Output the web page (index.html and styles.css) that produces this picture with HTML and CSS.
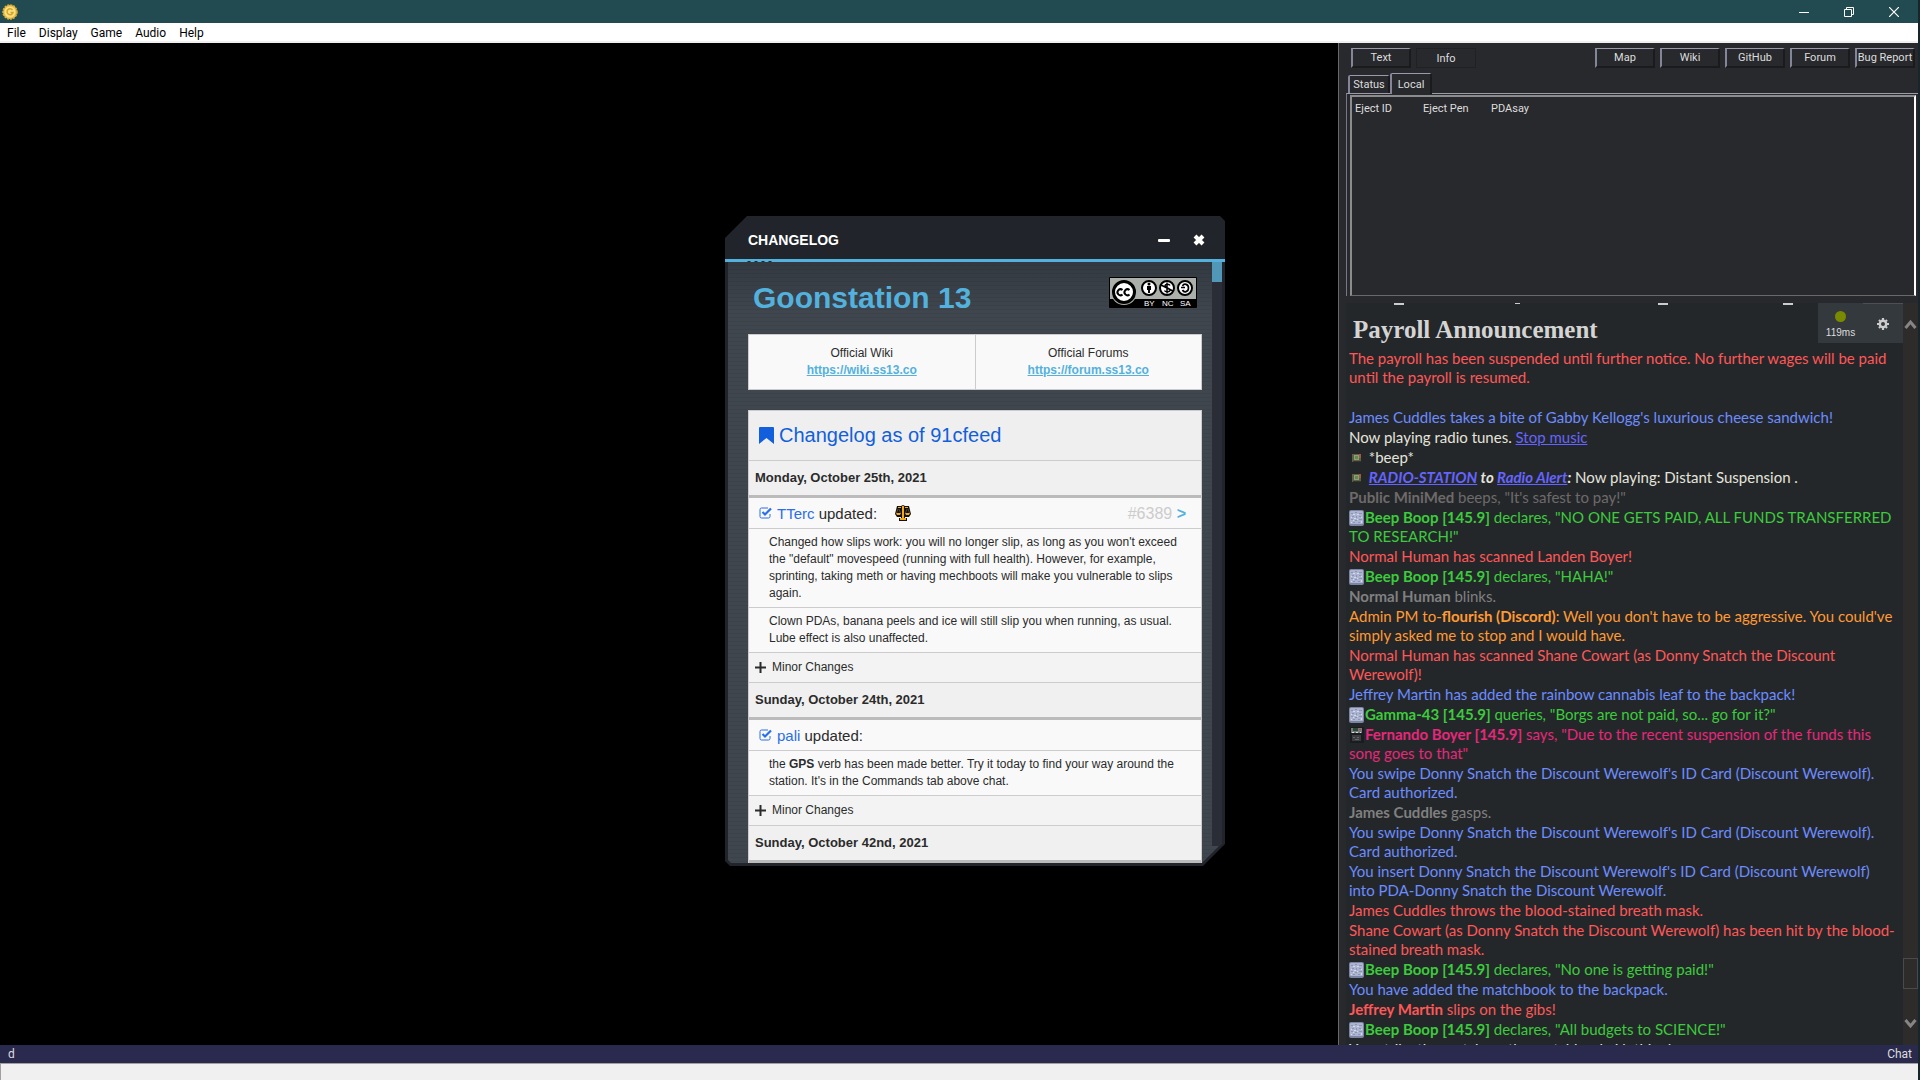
FILE: index.html
```html
<!DOCTYPE html>
<html lang="en">
<head>
    <meta charset="UTF-8">
    <meta name="viewport" content="width=device-width, initial-scale=1.0">
    <title>Goonstation 13</title>
    <link rel="stylesheet" href="styles.css">
</head>
<body>
    <!-- Shared icons -->
    <svg class="defs" width="0" height="0">
        <symbol id="icon-radio" viewBox="0 0 16 16">
            <path d="M3 4h9v8H3z" fill="#5d6046"/>
            <path d="M5 5h5v5H5z" fill="#8fa070"/>
            <path d="M6 6h3v3H6z" fill="#5f8a58"/>
            <path d="M10 4h2v4h-2z" fill="#a05a44"/>
            <path d="M4 11h8v1H4z" fill="#34362b"/>
        </symbol>
        <symbol id="icon-borg" viewBox="0 0 16 16">
            <rect x="0" y="0" width="15" height="16" rx="2" fill="#7c84a4"/>
            <rect x="1" y="1" width="13" height="13" rx="1" fill="#adb4cf"/>
            <path d="M2 3h2v1H2zM6 2h2v1H6zM10 3h3v1h-3zM3 6h2v1H3zM7 6h1v2H7zM10 6h2v1h-2zM2 9h2v1H2zM6 10h2v1H6zM10 9h3v1h-3zM4 12h2v1H4zM9 12h2v1H9z" fill="#8b93b8"/>
            <path d="M4 4h2v1H4zM8 4h2v1H8zM2 7h1v1H2zM5 8h2v1H5zM12 7h1v1h-1zM8 9h1v1H8zM4 10h1v1H4zM12 11h1v2h-1zM2 12h1v1H2z" fill="#d5daeb"/>
        </symbol>
        <symbol id="icon-passenger" viewBox="0 0 16 16">
            <rect x="1" y="0" width="14" height="16" fill="#1b1c1f"/>
            <path d="M2 1h11v5H2z" fill="#74797c"/>
            <path d="M4 1h5v3H4z" fill="#2c4a38"/>
            <path d="M10 2h2v1h-2z" fill="#c33"/>
            <path d="M3 5h2v1H3zM7 5h2v1H7zM11 5h1v1h-1z" fill="#d8dadd"/>
            <path d="M3 8h9v6H3z" fill="#3a3c3f"/>
            <path d="M4 10h2v1H4zM8 10h2v1H8zM6 12h4v1H6z" fill="#666"/>
        </symbol>
        <symbol id="icon-check" viewBox="0 0 14 12">
            <path d="M11 7v2.500a1.500 1.500 0 0 1-1.500 1.500h-7A1.500 1.500 0 0 1 1 9.500v-7A1.500 1.500 0 0 1 2.500 1H9" fill="none" stroke="#2a6fe8"/>
            <path d="M3.500 5L6 7.500 12 1.500" fill="none" stroke="#2a6fe8" stroke-width="2.200"/>
        </symbol>
        <symbol id="icon-plus" viewBox="0 0 11 11">
            <path d="M5.500 0v11M0 5.500h11" stroke="#2b2b2b" stroke-width="2"/>
        </symbol>
    </svg>

    <div class="app">
        <header class="titlebar">
            <svg class="app-icon" viewBox="0 0 16 16">
                <circle cx="8" cy="8" r="7" fill="#ecc040" stroke="#e0ad35" stroke-width="1.500" stroke-dasharray="2 1"/>
                <circle cx="8" cy="8" r="5.500" fill="#f7e08a"/>
                <path d="M10.500 6A3 3 0 1 0 11 8.500H8.500" fill="none" stroke="#d9a520" stroke-width="1.500"/>
            </svg>
            <div class="window-buttons">
                <button aria-label="Minimize"><svg width="10" height="10"><path d="M0 5.500h10" stroke="#fff"/></svg></button>
                <button aria-label="Restore"><svg width="10" height="10"><path d="M.5 2.500h7v7h-7zM2.500 2V.5h7v7H8" fill="none" stroke="#fff"/></svg></button>
                <button aria-label="Close"><svg width="10" height="10"><path d="M0 0l10 10M10 0L0 10" stroke="#fff" stroke-width="1.200"/></svg></button>
            </div>
        </header>

        <nav class="menubar">
            <a href="#">File</a>
            <a href="#">Display</a>
            <a href="#">Game</a>
            <a href="#">Audio</a>
            <a href="#">Help</a>
        </nav>

        <main class="main">
            <div class="map">
                <!-- Changelog popup -->
                <section class="popup">
                    <div class="popup-title">
                        <h2>CHANGELOG</h2>
                        <button aria-label="Minimize"><svg width="12" height="12"><rect x="0" y="5" width="12" height="3" rx="1" fill="#fff"/></svg></button>
                        <button aria-label="Close"><svg width="12" height="12"><path d="M2 2l8 8M10 2l-8 8" stroke="#fff" stroke-width="4"/></svg></button>
                    </div>
                    <div class="popup-line">
                        <svg width="30" height="3"><path d="M0 3L3 0h3L3 3zM7 3L10 0h3L10 3zM14 3L17 0h3L17 3zM21 3L24 0h3L24 3z" fill="#22272e"/></svg>
                    </div>
                    <div class="popup-body">
                        <div class="popup-content">
                            <div class="popup-head">
                                <h1>Goonstation 13</h1>
                                <svg class="cc-badge" width="88" height="31" viewBox="0 0 88 31">
                                    <rect width="88" height="31" rx="1" fill="#000"/>
                                    <path d="M1 1h86v21H1z" fill="#abb1aa"/>
                                    <circle cx="15" cy="15" r="13" fill="#abb1aa"/>
                                    <circle cx="15" cy="15" r="10.500" fill="#fff" stroke="#000" stroke-width="3"/>
                                    <path d="M13.500 13a3 3 0 1 0 0 4.500M20.500 13a3 3 0 1 0 0 4.500" fill="none" stroke="#000" stroke-width="2"/>
                                    <g fill="#fff" stroke="#000" stroke-width="2">
                                        <circle cx="40" cy="11" r="7"/>
                                        <circle cx="58" cy="11" r="7"/>
                                        <circle cx="76" cy="11" r="7"/>
                                    </g>
                                    <circle cx="40" cy="7" r="1.500"/>
                                    <path d="M38 9h4v4h-1v3h-2v-3h-1z"/>
                                    <path d="M61 8.500c-1-2-5-1.500-5 .5s5 2 5 4-4.500 2.500-5.500.5M58 5.500v11M52 8l12 6" fill="none" stroke="#000" stroke-width="1.500"/>
                                    <path d="M73.500 9c1.500-3 6-2 6 2s-4.500 5-6 2M72 10.500h4" fill="none" stroke="#000" stroke-width="1.700"/>
                                    <g class="cc-label">
                                        <text x="35" y="29">BY</text>
                                        <text x="53" y="29">NC</text>
                                        <text x="71" y="29">SA</text>
                                    </g>
                                </svg>
                            </div>

                            <div class="links">
                                <div>Official Wiki<br><a href="#">https://wiki.ss13.co</a></div>
                                <div>Official Forums<br><a href="#">https://forum.ss13.co</a></div>
                            </div>

                            <div class="log">
                                <h3>
                                    <svg width="15" height="17"><path d="M1 0h13a1 1 0 0 1 1 1v16l-7.500-6L0 17V1a1 1 0 0 1 1-1z" fill="#115fdc"/></svg>
                                    Changelog as of 91cfeed
                                </h3>

                                <h4>Monday, October 25th, 2021</h4>
                                <div class="author">
                                    <svg class="check" width="14" height="12"><use href="#icon-check"/></svg>
                                    <span><b>TTerc</b> updated:</span>
                                    <svg class="scales" width="16" height="16">
                                        <path d="M2 1h4l2-1 2 1h4l2 8-2 3h-4v1h2v3H4v-3h2v-1H2L0 9z" fill="#111"/>
                                        <path d="M7 1h2v12H7zM5 13h6v2H5z" fill="#f2a91e"/>
                                        <path d="M3 2h3v1H3zM10 2h3v1h-3zM1 8h5l-1 2H2zM10 8h5l-1 2h-3z" fill="#f2a91e"/>
                                        <path d="M3 4L1.500 8M4 4l1.500 4M12 4l-1.500 4M13 4l1.500 4" stroke="#8b6a2a" stroke-width=".6"/>
                                    </svg>
                                    <a class="pull" href="#"><span>#6389</span> &gt;</a>
                                </div>
                                <p>Changed how slips work: you will no longer slip, as long as you won't exceed the "default" movespeed (running with full health). However, for example, sprinting, taking meth or having mechboots will make you vulnerable to slips again.</p>
                                <p>Clown PDAs, banana peels and ice will still slip you when running, as usual. Lube effect is also unaffected.</p>
                                <button class="minor"><svg width="11" height="11"><use href="#icon-plus"/></svg>Minor Changes</button>

                                <h4>Sunday, October 24th, 2021</h4>
                                <div class="author">
                                    <svg class="check" width="14" height="12"><use href="#icon-check"/></svg>
                                    <span><b>pali</b> updated:</span>
                                </div>
                                <p>the <strong>GPS</strong> verb has been made better. Try it today to find your way around the station. It's in the Commands tab above chat.</p>
                                <button class="minor"><svg width="11" height="11"><use href="#icon-plus"/></svg>Minor Changes</button>

                                <h4>Sunday, October 42nd, 2021</h4>
                            </div>
                        </div>
                        <div class="popup-scroll"><div class="popup-thumb"></div></div>
                    </div>
                </section>
            </div>

            <aside class="side">
                <div class="toolbar">
                    <button>Text</button>
                    <button class="pressed">Info</button>
                    <button class="push">Map</button>
                    <button>Wiki</button>
                    <button>GitHub</button>
                    <button>Forum</button>
                    <button>Bug Report</button>
                </div>

                <div class="tabs">
                    <button>Status</button>
                    <button class="active">Local</button>
                </div>
                <div class="verbs">
                    <div class="verbs-list">
                        <a href="#">Eject ID</a>
                        <a href="#">Eject Pen</a>
                        <a href="#">PDAsay</a>
                    </div>
                </div>

                <div class="chat">
                    <div class="messages">
                        <svg class="cutoff" width="540" height="2"><path d="M45 1h10M166 0h5M309 1h10M434 1h10" stroke="#ccc" stroke-width="2"/></svg>
                        <h2>Payroll Announcement</h2>
                        <p class="red">The payroll has been suspended until further notice. No further wages will be paid until the payroll is resumed.</p>
                        <p>&nbsp;</p>
                        <p class="blue">James Cuddles takes a bite of Gabby Kellogg's luxurious cheese sandwich!</p>
                        <p>Now playing radio tunes. <a href="#">Stop music</a></p>
                        <p><svg class="icon"><use href="#icon-radio"/></svg> *beep*</p>
                        <p><svg class="icon"><use href="#icon-radio"/></svg> <b><i><a href="#">RADIO-STATION</a> to <a href="#">Radio Alert</a>:</i></b> Now playing: Distant Suspension .</p>
                        <p class="dim"><b>Public MiniMed</b> beeps, "It's safest to pay!"</p>
                        <p class="green"><svg class="icon"><use href="#icon-borg"/></svg><b>Beep Boop [145.9]</b> declares, "NO ONE GETS PAID, ALL FUNDS TRANSFERRED<br>TO RESEARCH!"</p>
                        <p class="red">Normal Human has scanned Landen Boyer!</p>
                        <p class="green"><svg class="icon"><use href="#icon-borg"/></svg><b>Beep Boop [145.9]</b> declares, "HAHA!"</p>
                        <p class="grey"><b>Normal Human</b> blinks.</p>
                        <p class="orange">Admin PM to-<b>flourish (Discord)</b>: Well you don't have to be aggressive. You could've<br>simply asked me to stop and I would have.</p>
                        <p class="red">Normal Human has scanned Shane Cowart (as Donny Snatch the Discount<br>Werewolf)!</p>
                        <p class="blue">Jeffrey Martin has added the rainbow cannabis leaf to the backpack!</p>
                        <p class="green"><svg class="icon"><use href="#icon-borg"/></svg><b>Gamma-43 [145.9]</b> queries, "Borgs are not paid, so... go for it?"</p>
                        <p class="pink"><svg class="icon"><use href="#icon-passenger"/></svg><b>Fernando Boyer [145.9]</b> says, "Due to the recent suspension of the funds this<br>song goes to that"</p>
                        <p class="blue">You swipe Donny Snatch the Discount Werewolf's ID Card (Discount Werewolf). Card authorized.</p>
                        <p class="grey"><b>James Cuddles</b> gasps.</p>
                        <p class="blue">You swipe Donny Snatch the Discount Werewolf's ID Card (Discount Werewolf). Card authorized.</p>
                        <p class="blue">You insert Donny Snatch the Discount Werewolf's ID Card (Discount Werewolf)<br>into PDA-Donny Snatch the Discount Werewolf.</p>
                        <p class="red">James Cuddles throws the blood-stained breath mask.</p>
                        <p class="red">Shane Cowart (as Donny Snatch the Discount Werewolf) has been hit by the blood-<br>stained breath mask.</p>
                        <p class="green"><svg class="icon"><use href="#icon-borg"/></svg><b>Beep Boop [145.9]</b> declares, "No one is getting paid!"</p>
                        <p class="blue">You have added the matchbook to the backpack.</p>
                        <p class="red"><b>Jeffrey Martin</b> slips on the gibs!</p>
                        <p class="green"><svg class="icon"><use href="#icon-borg"/></svg><b>Beep Boop [145.9]</b> declares, "All budgets to SCIENCE!"</p>
                        <p>You strike the match on the matchbook. Nothing!</p>
                    </div>
                    <div class="chat-tools">
                        <div class="ping"><span class="dot"></span>119ms</div>
                        <button class="gear" aria-label="Settings">
                            <svg width="12" height="12" viewBox="0 0 12 12">
                                <circle cx="6" cy="6" r="3.200" fill="none" stroke="#ccc" stroke-width="2.400"/>
                                <path d="M6 0v2M6 10v2M0 6h2M10 6h2M2 2l1.200 1.200M8.800 8.800L10 10M10 2L8.800 3.200M3.200 8.800L2 10" stroke="#ccc" stroke-width="2.200"/>
                            </svg>
                        </button>
                    </div>
                    <div class="chat-scroll">
                        <svg width="13" height="10"><path d="M1.500 9l5-6 5 6" fill="none" stroke="#858585" stroke-width="3"/></svg>
                        <div class="chat-thumb"></div>
                        <svg width="13" height="10"><path d="M1.500 1l5 6 5-6" fill="none" stroke="#858585" stroke-width="3"/></svg>
                    </div>
                </div>
            </aside>
        </main>

        <footer class="statusbar">
            <span>d</span>
            <label for="command">Chat</label>
        </footer>
        <input class="command" id="command" type="text">
    </div>
</body>
</html>
```
FILE: styles.css
```css
* {
    margin: 0;
    padding: 0;
    box-sizing: border-box;
}
body {
    height: 100vh;
    background: #16262a;
    font-family: "Liberation Sans", Arial, sans-serif;
    overflow: hidden;
}
button {
    border: none;
    background: none;
    color: inherit;
    font: inherit;
}
.defs {
    position: absolute;
}
.app {
    display: flex;
    flex-direction: column;
    height: 100vh;
    margin-right: 2px;
}

/* Title bar and menu */
.titlebar {
    display: flex;
    align-items: center;
    justify-content: space-between;
    height: 23px;
    padding: 0 2px;
    background: #214b51;
}
.app-icon {
    width: 16px;
    height: 16px;
}
.window-buttons {
    display: flex;
}
.window-buttons button {
    width: 45px;
    height: 20px;
    line-height: 0;
}
.menubar {
    display: flex;
    gap: 13px;
    height: 20px;
    padding: 0 7px;
    background: #fff;
    border-bottom: 2px solid #f0f0f0;
}
.menubar a {
    color: #000;
    font: 12px/20px Roboto, "Noto Sans", sans-serif;
    text-decoration: none;
}

.main {
    display: flex;
    flex: 1;
    min-height: 0;
}
.map {
    position: relative;
    flex: 1;
    background: #000;
}

/* Changelog popup */
.popup {
    position: absolute;
    top: 173px;
    left: 725px;
    display: flex;
    flex-direction: column;
    width: 500px;
    height: 650px;
    background: #21252b;
    clip-path: polygon(22px 0, calc(100% - 5px) 0, 100% 5px, 100% calc(100% - 22px), calc(100% - 22px) 100%, 5px 100%, 0 calc(100% - 5px), 0 22px);
}
.popup-title {
    display: flex;
    align-items: center;
    height: 43px;
    padding: 4px 20px 0 23px;
    color: #fff;
}
.popup-title h2 {
    flex: 1;
    font-size: 14px;
}
.popup-title button {
    width: 12px;
    height: 12px;
    margin-left: 23px;
    line-height: 0;
}
.popup-line {
    height: 3px;
    padding-left: 20px;
    background: #53b1dd;
    line-height: 0;
}
.popup-body {
    display: flex;
    flex: 1;
    min-height: 0;
    margin: 0 3px 3px;
    background: linear-gradient(rgba(33, 37, 43, 0.4), rgba(33, 37, 43, 0) 50px), repeating-linear-gradient(#3f464e 0, #3f464e 3px, #3b4249 3px, #3b4249 4px);
    clip-path: polygon(0 0, 100% 0, 100% calc(100% - 20px), calc(100% - 20px) 100%, 3px 100%, 0 calc(100% - 3px));
}
.popup-content {
    flex: 1;
    overflow: hidden;
    padding: 0 10px 0 20px;
    color: #2b2b2b;
    font-size: 12px;
    line-height: 17px;
}
.popup-scroll {
    width: 10px;
    margin-bottom: 17px;
    background: #2a2d35;
}
.popup-thumb {
    height: 20px;
    background: #5097b8;
}
.popup-head {
    display: flex;
    justify-content: space-between;
    height: 72px;
    padding: 15px 5px 0;
}
.popup-head h1 {
    color: #53b1dd;
    font-size: 30px;
    line-height: 42px;
}
.cc-label {
    fill: #fff;
    font-size: 8px;
}
.links {
    display: flex;
    height: 56px;
    border: 1px solid #ccc;
    background: #f9f9f9;
    text-align: center;
}
.links div {
    flex: 1;
    padding-top: 10px;
}
.links div:first-child {
    border-right: 1px solid #ccc;
}
.links a {
    color: #53b1dd;
    font-weight: bold;
}
.log {
    margin-top: 20px;
    border: 1px solid #ccc;
    background: #f9f9f9;
}
.log h3 {
    display: flex;
    align-items: center;
    gap: 5px;
    height: 50px;
    padding-left: 10px;
    border-bottom: 1px solid #ccc;
    background: #efefef;
    color: #115fdc;
    font-size: 20px;
    font-weight: normal;
}
.log h4 {
    height: 37px;
    padding-left: 6px;
    border-bottom: 3px solid #bbb;
    background: #f0f0f0;
    font-size: 13px;
    line-height: 34px;
}
.author {
    display: flex;
    align-items: center;
    height: 31px;
    padding: 0 15px 0 10px;
    border-bottom: 1px solid #ccc;
    font-size: 15px;
}
.author b {
    color: #2a6fe8;
    font-weight: normal;
}
.check {
    margin-right: 4px;
}
.scales {
    margin-left: 18px;
}
.pull {
    margin-left: auto;
    color: #53b1dd;
    font-size: 16px;
    font-weight: bold;
    text-decoration: none;
}
.pull span {
    color: #ccc;
    font-weight: normal;
}
.log p {
    padding: 5px 20px;
    border-bottom: 1px solid #ccc;
}
.minor {
    display: flex;
    align-items: center;
    gap: 6px;
    width: 100%;
    height: 30px;
    padding-left: 6px;
    border-bottom: 1px solid #ccc;
    background: #f3f3f3;
}

/* Right hand panel */
.side {
    display: flex;
    flex-direction: column;
    width: 580px;
    padding-left: 7px;
    border-left: 1px solid #696969;
    background: #28292d;
    color: #ddd;
    font: 11px Roboto, "Noto Sans", sans-serif;
}
.toolbar {
    display: flex;
    gap: 5px;
    padding: 5px 3px 0 5px;
}
.toolbar button {
    width: 60px;
    height: 20px;
    border: 2px solid #1b1b1e;
    border-top: 1px solid #9a9aac;
    border-left: 2px solid #85859a;
    white-space: nowrap;
}
.toolbar .pressed {
    border: 1px solid #202124;
}
.toolbar .push {
    margin-left: auto;
}
.tabs {
    display: flex;
    align-items: flex-end;
    height: 25px;
    padding-left: 2px;
}
.tabs button {
    width: 42px;
    height: 18px;
    border-top: 1px solid #9a9aac;
    border-left: 2px solid #85859a;
    border-right: 2px solid #1b1b1e;
    border-radius: 2px 2px 0 0;
}
.tabs .active {
    position: relative;
    height: 21px;
    margin-bottom: -1px;
    background: #28292d;
}
.verbs {
    height: 203px;
    padding: 1px 2px 0 3px;
    border-top: 1px solid #9a9aac;
    border-left: 1px solid #77778a;
}
.verbs-list {
    display: grid;
    grid-template-columns: repeat(auto-fill, 68px);
    align-content: start;
    height: 201px;
    padding: 5px 3px;
    border: 2px solid #8c8c8c;
    border-right-color: #fff;
    border-bottom: 1px solid #696969;
}
.verbs-list a {
    color: #ddd;
    text-decoration: none;
}

/* Chat */
.chat {
    position: relative;
    display: flex;
    flex: 1;
    min-height: 0;
    margin-top: 7px;
    background: #24272a;
}
.messages {
    flex: 1;
    overflow: hidden;
    padding: 0 0 0 3px;
    color: #e4e4dc;
    font: 15px/19px "Comic Sans MS", Lato, sans-serif;
}
.cutoff {
    display: block;
}
.messages h2 {
    padding: 11px 4px 5px;
    color: #d4d4d4;
    font: bold 25px/28px Georgia, "Liberation Serif", serif;
}
.messages p {
    padding-bottom: 1px;
}
.messages a {
    color: #6464ff;
}
.icon {
    width: 16px;
    height: 16px;
    vertical-align: -3px;
}
.messages .red { color: #ff5757; }
.messages .blue { color: #6c8cff; }
.messages .green { color: #3ccb3c; }
.messages .orange { color: #ff9a33; }
.messages .pink { color: #e6287a; }
.messages .grey { color: #808080; }
.messages .dim { color: #6e6a6a; }
.chat-tools {
    position: absolute;
    top: 0;
    right: 15px;
    display: flex;
    height: 40px;
    background: #34393d;
    font: 10px "Liberation Sans", sans-serif;
}
.ping {
    display: flex;
    flex-direction: column;
    align-items: center;
    gap: 5px;
    width: 45px;
    padding-top: 8px;
}
.dot {
    width: 11px;
    height: 11px;
    border-radius: 50%;
    background: #7a8a00;
}
.gear {
    width: 40px;
    border-top: 1px solid #4c5054;
    line-height: 0;
}
.chat-scroll {
    display: flex;
    flex-direction: column;
    align-items: center;
    width: 15px;
    padding: 16px 0;
    background: #2e2c2b;
}
.chat-thumb {
    align-self: stretch;
    height: 31px;
    margin: auto 0 30px;
    border: 1px solid #4a4a4c;
}

/* Status line and command input */
.statusbar {
    display: flex;
    justify-content: space-between;
    height: 18px;
    padding: 0 6px 0 8px;
    background: #2a294e;
    color: #ddd;
    font: 12px/18px Roboto, "Noto Sans", sans-serif;
}
.command {
    width: 100%;
    height: 17px;
    border: none;
    border-top: 1px solid #a0a0a0;
    border-left: 1px solid #a0a0a0;
    background: #f0f0f0;
}
```
